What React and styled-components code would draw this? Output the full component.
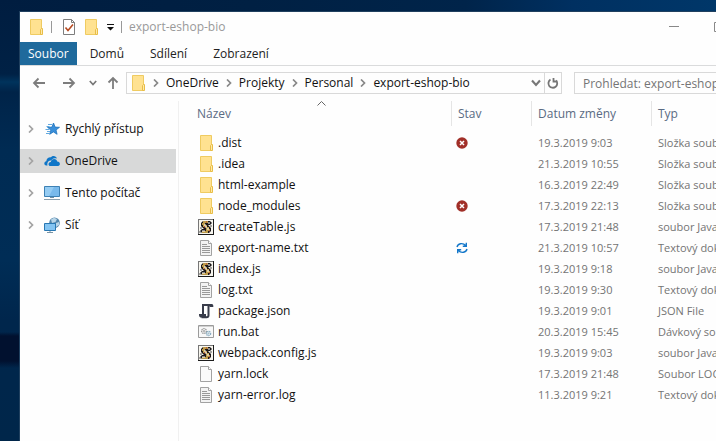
import React from "react";
import styled, { createGlobalStyle } from "styled-components";

const GlobalStyle = createGlobalStyle`
  * { box-sizing: border-box; }
  html, body, #root { height: 100%; }
  body {
    margin: 0;
    overflow: hidden;
    font: 12px/16px "Open Sans", "Noto Sans", sans-serif;
    color: #111;
  }
  button, input { font: inherit; color: inherit; }
  button { border: 0; padding: 0; background: none; }
`;

const Desktop = styled.main`
  min-height: 100vh;
  display: flex;
  padding: 12px 0 0 20px;
  overflow: hidden;
  background:
    linear-gradient(180deg, transparent 332px, #01112f 336px 361px, transparent 368px) 0 0 / 20px 100% no-repeat,
    linear-gradient(180deg, #001d40 0, #002145 74px, #00335c 82px, #002348 92px, #00264c 110px, #002b53 150px, #002d56 260px, #00264c 320px, #00264a 100%) 0 0 / 20px 100% no-repeat,
    linear-gradient(90deg, #001d40, #002043 35%, #00244a 65%, #003061 80%, #003769);
`;

const Window = styled.section`
  flex: 1;
  margin-right: -73px;
  display: flex;
  flex-direction: column;
  background: #fefefe;
  box-shadow: 0 0 0 1px #20405f;
`;

const TitleBar = styled.header`
  display: flex;
  align-items: center;
  height: 30px;
  padding-left: 8px;
`;

const IconButton = styled.button`
  display: flex;
  align-items: center;
  justify-content: center;
  flex: none;
  width: ${(p) => p.$width || 16}px;
  height: ${(p) => p.$height || 18}px;
  color: #777;
`;

const QuickTools = styled.div`
  display: flex;
  align-items: center;
  gap: 6px;
`;

const Divider = styled.span`
  width: 1px;
  height: 12px;
  margin: 0 ${(p) => p.$after || 0}px 0 ${(p) => p.$before || 0}px;
  background: #999;
`;

const Title = styled.h1`
  margin: 0 0 0 7px;
  font: inherit;
  color: #999;
`;

const Controls = styled.div`
  display: flex;
  margin-left: auto;
`;

const Tabs = styled.nav`
  display: flex;
  height: 24px;
  border-bottom: 1px solid #dadbdc;
`;

const Tab = styled.button`
  height: 23px;
  padding: 1px ${(p) => (p.$file ? 8 : 13)}px 0;
  color: ${(p) => (p.$file ? "#fff" : "#222")};
  background: ${(p) => (p.$file ? "#1f6a9c" : "transparent")};
`;

const NavBar = styled.div`
  display: flex;
  align-items: center;
  height: 35px;
  padding: 0 8px 1px 4px;
`;

const NavButtons = styled.div`
  display: flex;
  width: 102px;
`;

const Address = styled.div`
  flex: 1;
  display: flex;
  height: 22px;
  border: 1px solid #d9d9d9;
`;

const Crumbs = styled.ol`
  flex: 1;
  display: flex;
  align-items: center;
  list-style: none;
  margin: 0;
  padding: 0 0 0 3px;
`;

const Crumb = styled.li`
  display: flex;
  align-items: center;
  a { color: inherit; text-decoration: none; white-space: nowrap; }
`;

const CrumbArrow = styled.span`
  display: flex;
  justify-content: center;
  width: 20px;
  color: #888;
`;

const Refresh = styled.div`
  display: flex;
  align-items: center;
  border-left: 1px solid #d9d9d9;
`;

const Search = styled.input`
  width: 207px;
  height: 22px;
  margin-left: 12px;
  padding: 0 8px;
  border: 1px solid #d9d9d9;
  border-radius: 0;
  background: transparent;
  &::placeholder { color: #757575; opacity: 1; }
`;

const Body = styled.div`
  flex: 1;
  display: flex;
`;

const Sidebar = styled.nav`
  flex: none;
  width: 159px;
  padding: 16px 2px 0 0;
  border-right: 1px solid #f0f0f0;
  display: flex;
  flex-direction: column;
  gap: 8px;
`;

const Place = styled.a`
  display: flex;
  align-items: center;
  height: 24px;
  padding-left: 7px;
  color: inherit;
  text-decoration: none;
  background: ${(p) => (p.$current ? "#d8d9d9" : "transparent")};
  svg { flex: none; margin-right: 5px; }
  svg:first-child { margin-right: 9px; color: #a3a3a3; }
`;

const Files = styled.table`
  flex: 1;
  align-self: flex-start;
  margin-left: 9px;
  table-layout: fixed;
  border-collapse: collapse;
`;

const Column = styled.col`
  width: ${(p) => (p.$width ? `${p.$width}px` : "auto")};
`;

const HeadCell = styled.th`
  position: relative;
  height: 31px;
  padding: 0 0 6px;
  text-align: left;
  font-weight: 400;
  color: #5a6b83;
`;

const HeadLabel = styled.div`
  height: 25px;
  padding: 5px 6px 0 ${(p) => (p.$first ? 9 : 6)}px;
  border-left: ${(p) => (p.$first ? 0 : 1)}px solid #e5e5e5;
`;

const SortMark = styled.svg`
  position: absolute;
  top: 0;
  left: 50%;
  margin-left: -3px;
`;

const Cell = styled.td`
  height: 21px;
  padding: 0 0 0 ${(p) => p.$indent || 7}px;
  white-space: nowrap;
  font-size: ${(p) => (p.$small ? 11 : 12)}px;
  color: ${(p) => (p.$name ? "#111" : "#747474")};
  svg { display: block; }
`;

const FileName = styled.span`
  display: flex;
  align-items: center;
  gap: 4px;
`;

const Chevron = ({ dir = "right", size = 8 }) => {
  const d = { right: "M2 0.5 5.500 4 2 7.500", down: "M0.8 2 4 5.500 7.200 2" }[dir];
  return (
    <svg width={size} height={size} viewBox="0 0 8 8" fill="none" stroke="currentColor" strokeWidth="1.700">
      <path d={d} />
    </svg>
  );
};

const Arrow = ({ dir }) => {
  const d = {
    left: "M14 8H3M7.500 3.500 3 8l4.500 4.500",
    right: "M2 8h11M8.500 3.500 13 8l-4.500 4.500",
    up: "M8 14V3M3.500 7.500 8 3l4.500 4.500",
  }[dir];
  return (
    <svg width="16" height="16" viewBox="0 0 16 16" fill="none" stroke="#7d7d7d" strokeWidth="1.800">
      <path d={d} />
    </svg>
  );
};

const FolderIcon = () => (
  <svg width="16" height="16" viewBox="0 0 16 16">
    <path d="M2.500.5h11v15h-11z" fill="#ffe291" stroke="#efcb61" />
    <path d="M12.500 15.500v-5l1-1h1v6z" fill="#ffe9a9" stroke="#e8bd46" />
  </svg>
);

const CheckDocIcon = () => (
  <svg width="16" height="16" viewBox="0 0 16 16">
    <path d="M2.500.5h8l3 3v12h-11z" fill="#fff" stroke="#7d7d7d" />
    <path d="M10.500.5v3h3" fill="none" stroke="#7d7d7d" />
    <path d="M4.500 8.500 7 11.500 12 5.500" fill="none" stroke="#b64b22" strokeWidth="1.600" />
  </svg>
);

const ScriptIcon = () => (
  <svg width="16" height="16" viewBox="0 0 16 16">
    <path d="M0 0h16v16H0z" fill="#1c1c1c" />
    <path d="M0 0h15v15H0z" fill="#777" />
    <path d="M1 1h14v14H1z" fill="#f7f5ee" />
    <path d="M5 2h7l2 2-2 2h-2l3 3v3l-2 2H4l-2-2 2-2h2L3 7V4z" fill="#1b1718" />
    <path d="M5 3h5M4 5h3M5 7h4M8 9h3M8 11h4M4 13h6" stroke="#f3c65c" strokeWidth="1.300" />
    <path d="M10 4h2M6 6h2M7 8h2M9 10h2M4 12h3" stroke="#fff" />
    <path d="M8 3h1M6 8h1M11 12h1" stroke="#b6372a" />
    <path d="M12 7h2M2 9h2M1 13h2" stroke="#555" />
  </svg>
);

const PageIcon = ({ lines }) => (
  <svg width="16" height="16" viewBox="0 0 16 16">
    <path d="M2.500.5h8l3 3v12h-11z" fill={lines ? "#f3f3f3" : "#fafafa"} stroke="#a2a2a2" />
    <path d="M10.500.5v3h3" fill="#fff" stroke="#a2a2a2" />
    {lines && <path d="M4 4.500h5M4 6.500h8M4 8.500h8M4 10.500h8M4 12.500h8" stroke="#999" />}
  </svg>
);

const JsonIcon = () => (
  <svg width="16" height="16" viewBox="0 0 16 16" fill="none" stroke="#383c4a" strokeWidth="2">
    <path d="M5 11V2h8.500" />
    <path d="M10.500 2v10.200c0 1.500-.8 2-2 2H3.500" />
    <path d="M1 11h7v2c0 1 .4 1.600 1 1.600H3.400C2 14.600 1 13.600 1 12z" fill="#383c4a" stroke="none" />
    <path d="M11.500 1h2.300c1.200 0 1.500 1 1.500 2.200V4h-3.800z" fill="#383c4a" stroke="none" />
  </svg>
);

const BatchIcon = () => (
  <svg width="16" height="16" viewBox="0 0 16 16" fill="none">
    <path d="M.5 1.500h15v12H.5z" fill="#f8f8f8" stroke="#9b9b9b" />
    <path d="M1 2.500h14" stroke="#d0d0d0" />
    <circle cx="6" cy="7" r="2.400" stroke="#999" strokeWidth="1.300" strokeDasharray="1.300 .6" />
    <circle cx="6" cy="7" r=".8" stroke="#999" strokeWidth=".8" />
    <circle cx="10.500" cy="9.500" r="2.100" stroke="#86abc0" strokeWidth="1.300" strokeDasharray="1.300 .6" />
    <circle cx="10.500" cy="9.500" r=".6" stroke="#86abc0" strokeWidth=".8" />
  </svg>
);

const StarIcon = () => (
  <svg width="16" height="16" viewBox="0 0 16 16">
    <path d="m9.500 2 1.600 4.100 4.400.2-3.500 2.700 1.100 4.300-3.700-2.400-3.700 2.400L6.900 9 3.500 6.300l4.400-.2z" fill="#398fda" stroke="#1e72bb" strokeWidth=".8" />
    <path d="M4 3.500h4M2.500 5.500h3M1.500 8.500h4M3 10.500h3M2 12.500h4" stroke="#62a9df" />
  </svg>
);

const CloudIcon = () => (
  <svg width="16" height="16" viewBox="0 0 16 16" fill="#0f76c8">
    <path d="M3.500 12.500H2.200C-.6 12 0 8.500 2.300 8.200 2.500 5.500 4.700 4 6.900 4.300 8.800 1.900 12.300 2.900 13 5.600 9.500 4.600 8 6 7.300 7.500 4.500 7.200 2.700 9.500 3.500 12.500z" />
    <path d="M5.800 13c-2-.6-1.600-4 1-4 .5-3.500 5.400-4 6.400-.6 3.200 0 3.600 4.200.8 4.600z" />
  </svg>
);

const ComputerIcon = () => (
  <svg width="16" height="16" viewBox="0 0 16 16">
    <path d="M.5 1.500h15v10H.5z" fill="#78b9eb" stroke="#3d81b4" />
    <path d="M1 2h9L5 11H1z" fill="#95ccf3" />
    <path d="M6 12.500h4" stroke="#708da2" />
    <path d="M0 14.500h16" stroke="#8ba0ae" />
  </svg>
);

const NetworkIcon = () => (
  <svg width="16" height="16" viewBox="0 0 16 16">
    <circle cx="10.500" cy="5.800" r="5.300" fill="#5487ac" />
    <path d="M7 2.500 10 .8l3 1.200-1.500 3L8 6zM12 6l3-1v3l-3 2z" fill="#b8d5e8" />
    <path d="M.5 6.500h11v7H.5z" fill="#83c4f2" stroke="#2877b2" />
    <path d="M6 14v1.500M3 15.500h6" stroke="#7894a6" />
  </svg>
);

const ErrorIcon = () => (
  <svg width="12" height="12" viewBox="0 0 12 12" role="img" aria-label="Chyba">
    <circle cx="6" cy="6" r="5.700" fill="#a12f28" />
    <path d="m4 4 4 4M8 4 4 8" stroke="#fff" strokeWidth="1.500" />
  </svg>
);

const SyncIcon = () => (
  <svg width="12" height="12" viewBox="0 0 12 12" fill="none" stroke="#1578ca" strokeWidth="1.400" role="img" aria-label="Synchronizace">
    <path d="M1 5C1.800 1.500 6.500.3 9.700 3.400M10.300.8v3.500H6.800M11 7c-.8 3.500-5.500 4.700-8.700 1.600M1.700 11.200V7.700h3.500" />
  </svg>
);

const icons = {
  folder: <FolderIcon />,
  script: <ScriptIcon />,
  text: <PageIcon lines />,
  page: <PageIcon />,
  json: <JsonIcon />,
  batch: <BatchIcon />,
};

const places = [
  ["Rychlý přístup", <StarIcon />],
  ["OneDrive", <CloudIcon />],
  ["Tento počítač", <ComputerIcon />],
  ["Síť", <NetworkIcon />],
];

const crumbs = ["OneDrive", "Projekty", "Personal", "export-eshop-bio"];

const files = [
  ["folder", ".dist", "error", "19.3.2019 9:03", "Složka souborů"],
  ["folder", ".idea", "", "21.3.2019 10:55", "Složka souborů"],
  ["folder", "html-example", "", "16.3.2019 22:49", "Složka souborů"],
  ["folder", "node_modules", "error", "17.3.2019 22:13", "Složka souborů"],
  ["script", "createTable.js", "", "17.3.2019 21:48", "soubor JavaScript"],
  ["text", "export-name.txt", "sync", "21.3.2019 10:57", "Textový dokument"],
  ["script", "index.js", "", "19.3.2019 9:18", "soubor JavaScript"],
  ["text", "log.txt", "", "19.3.2019 9:30", "Textový dokument"],
  ["json", "package.json", "", "19.3.2019 9:01", "JSON File"],
  ["batch", "run.bat", "", "20.3.2019 15:45", "Dávkový soubor"],
  ["script", "webpack.config.js", "", "19.3.2019 9:03", "soubor JavaScript"],
  ["page", "yarn.lock", "", "17.3.2019 21:48", "Soubor LOCK"],
  ["text", "yarn-error.log", "", "11.3.2019 9:21", "Textový dokument"],
];

export default function App() {
  return (
    <Desktop>
      <GlobalStyle />
      <Window>
        <TitleBar>
          <FolderIcon />
          <Divider $before={7} $after={9} />
          <QuickTools>
            <IconButton aria-label="Vlastnosti"><CheckDocIcon /></IconButton>
            <IconButton aria-label="Nová složka"><FolderIcon /></IconButton>
            <IconButton aria-label="Přizpůsobit panel" $width={10}>
              <svg width="7" height="8" viewBox="0 0 7 8" fill="#111">
                <path d="M0 1h7v1H0zM0 4h7L3.500 7.500z" />
              </svg>
            </IconButton>
          </QuickTools>
          <Divider $before={6} />
          <Title>export-eshop-bio</Title>
          <Controls>
            <IconButton aria-label="Minimalizovat" $width={46} $height={28}>
              <svg width="10" height="10"><path d="M0 4.500h10" stroke="#888" /></svg>
            </IconButton>
            <IconButton aria-label="Maximalizovat" $width={46} $height={28}>
              <svg width="12" height="10"><path d="M.5.5h10v9H.5z" fill="none" stroke="#888" /></svg>
            </IconButton>
            <IconButton aria-label="Zavřít" $width={46} $height={28}>
              <svg width="10" height="10"><path d="m0 0 10 10M10 0 0 10" stroke="#888" /></svg>
            </IconButton>
          </Controls>
        </TitleBar>
        <Tabs>
          <Tab $file>Soubor</Tab>
          <Tab>Domů</Tab>
          <Tab>Sdílení</Tab>
          <Tab>Zobrazení</Tab>
        </Tabs>
        <NavBar>
          <NavButtons>
            <IconButton aria-label="Zpět" $width={30}><Arrow dir="left" /></IconButton>
            <IconButton aria-label="Vpřed" $width={30}><Arrow dir="right" /></IconButton>
            <IconButton aria-label="Poslední umístění" $width={18}><Chevron dir="down" /></IconButton>
            <IconButton aria-label="Nahoru" $width={22}><Arrow dir="up" /></IconButton>
          </NavButtons>
          <Address>
            <Crumbs>
              <FolderIcon />
              {crumbs.map((name) => (
                <Crumb key={name}>
                  <CrumbArrow><Chevron /></CrumbArrow>
                  <a href="#">{name}</a>
                </Crumb>
              ))}
            </Crumbs>
            <IconButton aria-label="Předchozí umístění" $height={20}><Chevron dir="down" size={10} /></IconButton>
            <Refresh>
              <IconButton aria-label="Aktualizovat" $height={20}>
                <svg width="12" height="12" viewBox="0 0 12 12" fill="none" stroke="#757575" strokeWidth="1.800">
                  <path d="M3.500 2.600A4.400 4.400 0 1 0 9 3.300M6.500 1v3.500h4" />
                </svg>
              </IconButton>
            </Refresh>
          </Address>
          <Search aria-label="Prohledat" placeholder="Prohledat: export-eshop-bio" />
        </NavBar>
        <Body>
          <Sidebar>
            {places.map(([name, icon]) => (
              <Place key={name} href="#" $current={name === "OneDrive"}>
                <Chevron />
                {icon}
                {name}
              </Place>
            ))}
          </Sidebar>
          <Files>
            <colgroup>
              <Column $width={263} />
              <Column $width={80} />
              <Column $width={120} />
              <Column />
            </colgroup>
            <thead>
              <tr>
                <HeadCell aria-sort="ascending">
                  <SortMark width="9" height="5" viewBox="0 0 9 5" fill="none" stroke="#666">
                    <path d="M.5 4.500l4-4 4 4" />
                  </SortMark>
                  <HeadLabel $first>Název</HeadLabel>
                </HeadCell>
                <HeadCell><HeadLabel>Stav</HeadLabel></HeadCell>
                <HeadCell><HeadLabel>Datum změny</HeadLabel></HeadCell>
                <HeadCell><HeadLabel>Typ</HeadLabel></HeadCell>
              </tr>
            </thead>
            <tbody>
              {files.map(([icon, name, state, date, type]) => (
                <tr key={name}>
                  <Cell $name $indent={10}>
                    <FileName>{icons[icon]}{name}</FileName>
                  </Cell>
                  <Cell $indent={5}>
                    {state === "error" && <ErrorIcon />}
                    {state === "sync" && <SyncIcon />}
                  </Cell>
                  <Cell $small>{date}</Cell>
                  <Cell $small>{type}</Cell>
                </tr>
              ))}
            </tbody>
          </Files>
        </Body>
      </Window>
    </Desktop>
  );
}
